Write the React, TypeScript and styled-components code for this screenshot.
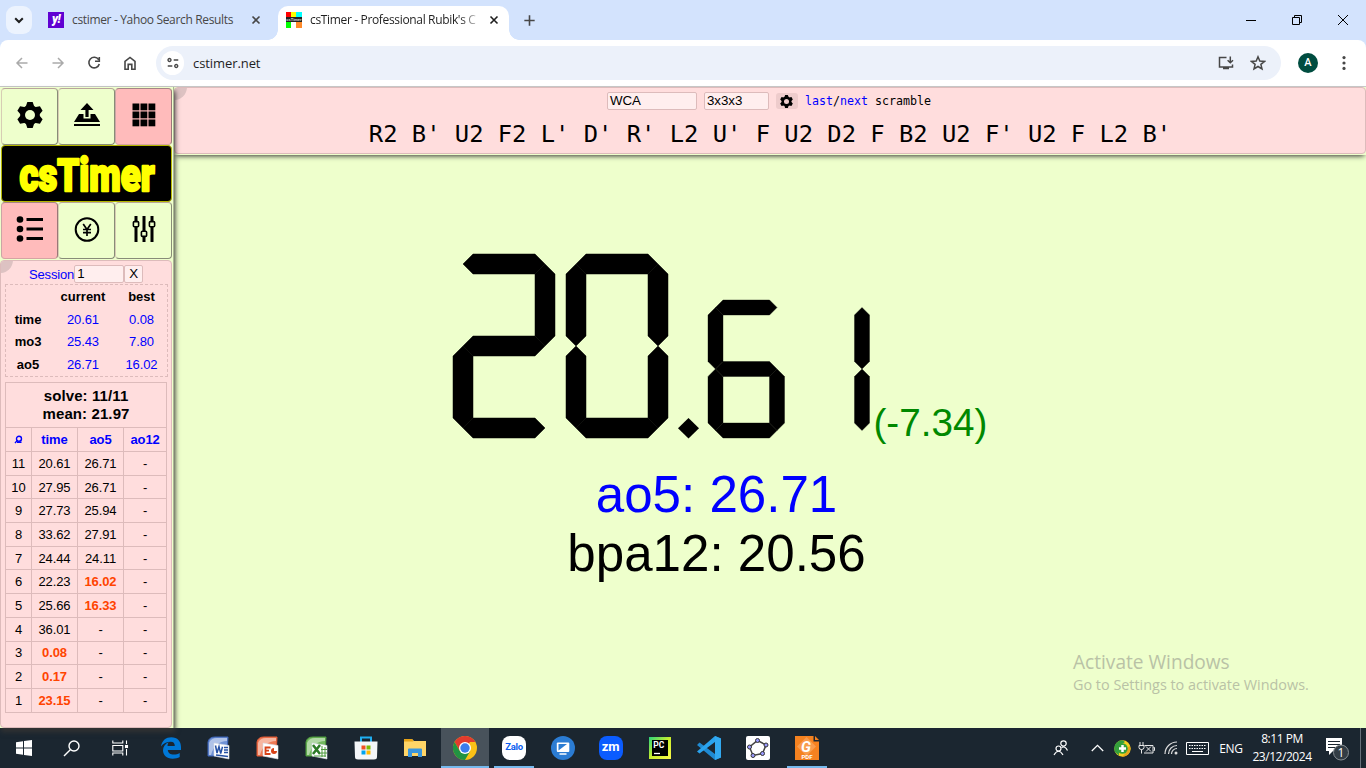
import React from "react";
import styled, { createGlobalStyle, css } from "styled-components";

const Global = createGlobalStyle`
  * { box-sizing: border-box; }
  html, body { margin: 0; padding: 0; overflow: hidden; }
  body { font-family: "Liberation Sans", Arial, sans-serif; color: #000; }
  svg { display: block; flex: none; }
`;

const ui = css`
  font-family: "Open Sans", "Noto Sans", sans-serif;
  white-space: nowrap;
`;

const Screen = styled.div`
  width: 1366px;
  height: 768px;
  display: flex;
  flex-direction: column;
  overflow: hidden;
  background: #eeffcc;
`;

/* ---------- browser chrome ---------- */

const TabStrip = styled.div`
  height: 40px;
  flex: none;
  display: flex;
  background: #d3e3fd;
`;

const TabSearch = styled.div`
  width: 26px;
  height: 28px;
  margin: 6px 0 0 6px;
  border-radius: 9px;
  background: #ecf3fe;
  display: flex;
  align-items: center;
  justify-content: center;
`;

const Tab = styled.div<{ $active?: boolean }>`
  position: relative;
  display: flex;
  align-items: center;
  width: ${(p) => (p.$active ? 231 : 246)}px;
  height: ${(p) => (p.$active ? 34 : 28)}px;
  margin-top: 6px;
  padding: 0 0 ${(p) => (p.$active ? 6 : 0)}px ${(p) => (p.$active ? 8 : 16)}px;
  background: ${(p) => (p.$active ? "#fff" : "transparent")};
  border-radius: 10px 10px 0 0;
  ${(p) =>
    p.$active &&
    css`
      &::before,
      &::after {
        content: "";
        position: absolute;
        bottom: 0;
        width: 10px;
        height: 10px;
      }
      &::before {
        left: -10px;
        background: radial-gradient(circle at 0 0, transparent 9.5px, #fff 10px);
      }
      &::after {
        right: -10px;
        background: radial-gradient(circle at 100% 0, transparent 9.5px, #fff 10px);
      }
    `}
`;

const TabTitle = styled.span<{ $fade?: boolean }>`
  ${ui}
  font-size: 12px;
  line-height: 18px;
  letter-spacing: -0.34px;
  width: 176px;
  margin-left: 8px;
  color: ${(p) => (p.$fade ? "#1f1f1f" : "#474747")};
  ${(p) => p.$fade && "mask-image: linear-gradient(90deg, #000 150px, transparent 172px);"}
`;

const YahooMark = styled.span`
  width: 16px;
  height: 16px;
  background: #6001d2;
  color: #fff;
  font: italic 900 12px/14px Roboto, sans-serif;
  text-align: center;
  letter-spacing: -0.5px;
`;

const CubeMark = styled.span`
  width: 16px;
  height: 16px;
  background: linear-gradient(90deg, #f00 5px, #ff0 5px 10px, #0ff 10px) top / 16px 5px no-repeat,
    linear-gradient(90deg, #0f0 5px, #fff 5px 10px, #ff8a2a 10px) bottom / 16px 6px no-repeat, #222;
  color: #ddd;
  font: bold 4px/15px "Liberation Sans", sans-serif;
  text-align: center;
`;

const NewTab = styled.div`
  margin: 13px 0 0 13px;
`;

const WindowButtons = styled.div`
  margin: 14px 17px 0 auto;
  display: flex;
  gap: 34px;
`;

const ToolbarWrap = styled.div`
  height: 46px;
  flex: none;
  background: #d3e3fd;
`;

const Toolbar = styled.div`
  height: 46px;
  background: #fff;
  border-radius: 8px 8px 0 0;
  display: flex;
  align-items: center;
  padding-left: 14px;
`;

const NavIcons = styled.div`
  display: flex;
  gap: 20px;
  width: 132px;
`;

const AddressBar = styled.div`
  width: 1125px;
  height: 34px;
  border-radius: 17px;
  background: #ecf1fa;
  display: flex;
  align-items: center;
  padding-left: 5px;
`;

const SiteInfo = styled.span`
  width: 23px;
  height: 24px;
  border-radius: 12px;
  background: #fff;
  display: flex;
  align-items: center;
  justify-content: center;
`;

const Url = styled.span`
  ${ui}
  font-size: 13px;
  letter-spacing: -0.08px;
  margin-left: 9px;
  color: #1f1f1f;
  flex: 1;
`;

const AddressActions = styled.div`
  display: flex;
  gap: 16px;
  margin-right: 15px;
`;

const Avatar = styled.span`
  width: 20px;
  height: 20px;
  border-radius: 50%;
  margin: 0 18px 0 17px;
  background: #004d40;
  color: #fff;
  font: 500 11px/20px Roboto, sans-serif;
  text-align: center;
`;

/* ---------- page ---------- */

const Page = styled.div`
  flex: 1;
  min-height: 0;
  display: flex;
  border-top: 1px solid #c9c9c9;
`;

const Sidebar = styled.div`
  position: relative;
  z-index: 1;
  width: 174px;
  display: flex;
  flex-direction: column;
  background: #eeffcc;
  box-shadow: 1px 4px 5px #333;
  border-right: 1px solid #aab594;
`;

const MenuGrid = styled.div`
  display: grid;
  grid-template-columns: 57px 57px 57px;
  grid-template-rows: 57px 57px 57px;
  padding: 1px 0 0 1px;
  height: 173px;
`;

const MenuButton = styled.div<{ $on?: boolean }>`
  display: flex;
  align-items: center;
  justify-content: center;
  padding-bottom: 3px;
  border: 1px solid #b9b39b;
  border-color: ${(p) => (p.$on ? "#a58585 #977 #d6a3a3 #cba5a5" : "#b9a59b #888c78 #888c78 #d7cdb4")};
  border-radius: 4px;
  background: ${(p) => (p.$on ? "#ffbbbb" : "#eeffcc")};
`;

const Logo = styled.div`
  grid-column: 1 / 4;
  display: flex;
  align-items: center;
  justify-content: center;
  background: #000;
  border: 1px solid #b5b500;
  border-radius: 4px;
`;

const LogoText = styled.text`
  font: 900 46px Roboto, "Liberation Sans", sans-serif;
  fill: #ff0;
  stroke: #ff0;
  stroke-width: 2.4px;
  stroke-linejoin: round;
`;

const LogoCap = styled.tspan`
  font-size: 44px;
`;

const panel = css`
  position: relative;
  overflow: hidden;
  background: #ffdddd;
  border: 1px solid #ddbbbb;
  border-radius: 4px;
  &::before {
    content: "";
    position: absolute;
    left: -14px;
    top: -14px;
    width: 26px;
    height: 26px;
    border-radius: 50%;
    background: #ddc2c2;
  }
`;

const ListPanel = styled.div`
  ${panel}
  width: 172px;
  flex: 1;
  padding: 4px 0 0 4px;
`;

const SessionRow = styled.div`
  display: flex;
  align-items: center;
  height: 18px;
  padding-left: 24px;
  font-size: 13px;
  letter-spacing: -0.15px;
  color: #00f;
`;

const Field = styled.span<{ $w: number; $center?: boolean }>`
  width: ${(p) => p.$w}px;
  height: 18px;
  border: 1px solid #ddbbbb;
  border-radius: 2px;
  background: #ffeeee;
  color: #000;
  font: 13.3px/16px "Liberation Sans", sans-serif;
  letter-spacing: 0;
  padding-left: ${(p) => (p.$center ? 0 : 2)}px;
  text-align: ${(p) => (p.$center ? "center" : "left")};
`;

const Stats = styled.div`
  width: 163px;
  height: 93px;
  margin-top: 1px;
  border: 1px dashed #ddbbbb;
  display: grid;
  grid-template-columns: 44px 66px 51px;
  grid-template-rows: 23px 22.5px 22.5px 22.5px;
  align-items: center;
  text-align: center;
  font-size: 13px;
`;

const Stat = styled.span<{ $head?: boolean }>`
  font-weight: ${(p) => (p.$head ? "bold" : "normal")};
  color: ${(p) => (p.$head ? "#000" : "#00f")};
  letter-spacing: ${(p) => (p.$head ? 0 : "-0.1px")};
`;

const Times = styled.table`
  width: 162px;
  margin-top: 5px;
  border-collapse: collapse;
  table-layout: fixed;
  font-size: 13px;
  letter-spacing: -0.1px;
  td, th {
    border: 1px solid #ddbbbb;
    padding: 0;
    text-align: center;
    line-height: 15px;
  }
`;

const Summary = styled.th`
  height: 45px;
  font-size: 15px;
  letter-spacing: 0.1px;
  div { line-height: 18px; }
`;

const Head = styled.th`
  height: 24px;
  color: #00f;
`;

const Cell = styled.td<{ $best?: boolean }>`
  height: 23.7px;
  color: ${(p) => (p.$best ? "#ff4400" : "#000")};
  font-weight: ${(p) => (p.$best ? "bold" : "normal")};
`;

const Main = styled.div`
  flex: 1;
  display: flex;
  flex-direction: column;
  position: relative;
`;

const ScramblePanel = styled.div`
  ${panel}
  height: 67px;
  flex: none;
  display: flex;
  flex-direction: column;
  align-items: center;
`;

const ScrambleShadow = styled.div`
  box-shadow: 0 3px 5px -2px #333;
  border-bottom: 1px solid #eeffcc;
`;

const ScrambleTools = styled.div`
  display: flex;
  align-items: center;
  height: 18px;
  margin: 4px 2px 0 0;
  font: 11.65px "DejaVu Sans Mono", monospace;
  white-space: pre;
`;

const Gap = styled.span<{ $w: number }>`
  width: ${(p) => p.$w}px;
`;

const GearBox = styled.span`
  width: 22px;
  height: 16px;
  border-radius: 3px;
  background: #eecccc;
  display: flex;
  align-items: center;
  justify-content: center;
`;

const Blue = styled.span`
  color: #00f;
`;

const Scramble = styled.div`
  font: 23.8px/34px "DejaVu Sans Mono", monospace;
  white-space: pre;
  margin-top: 7px;
`;

const TimerArea = styled.div`
  padding: 99px 0 0 279px;
`;

const TimerRow = styled.div`
  display: flex;
  align-items: flex-end;
  height: 184px;
`;

const Delta = styled.span`
  color: #008800;
  font-size: 38.7px;
  line-height: 44px;
  margin: 0 0 -7px 4px;
`;

const Averages = styled.div`
  width: 527px;
  margin-top: 27px;
  text-align: center;
  font-size: 51.1px;
  line-height: 59px;
  white-space: nowrap;
`;

const Watermark = styled.div`
  ${ui}
  position: absolute;
  left: 899px;
  bottom: 33px;
  color: #b9c2a6;
  font-size: 14.4px;
  line-height: 20px;
`;

const WatermarkTitle = styled.div`
  font-size: 19.1px;
  line-height: 26px;
`;

/* ---------- taskbar ---------- */

const Taskbar = styled.div`
  height: 40px;
  flex: none;
  background: #1b2630;
  display: flex;
  color: #fff;
`;

const TaskItem = styled.div<{ $active?: boolean; $open?: boolean; $w?: number }>`
  width: ${(p) => p.$w ?? 49}px;
  display: flex;
  align-items: center;
  justify-content: center;
  background: ${(p) => (p.$active ? "#48525b" : "transparent")};
  ${(p) =>
    p.$active &&
    "box-shadow: inset 0 -2px #76b9ed;"}
  ${(p) =>
    p.$open &&
    "background: linear-gradient(#76b9ed, #76b9ed) center bottom / 40px 2px no-repeat;"}
`;

const Tray = styled.div`
  ${ui}
  margin-left: auto;
  display: flex;
  align-items: center;
  font-size: 12px;
`;

const Clock = styled.div`
  width: 62px;
  text-align: center;
  line-height: 18px;
  letter-spacing: -0.45px;
  padding-bottom: 1px;
`;

const Lang = styled.span`
  width: 38px;
  text-align: center;
  letter-spacing: -0.3px;
`;

const AppTile = styled.span<{ $bg: string; $fg: string; $size: number; $round?: number }>`
  width: 24px;
  height: 24px;
  border-radius: ${(p) => p.$round ?? 8}px;
  background: ${(p) => p.$bg};
  color: ${(p) => p.$fg};
  font: bold ${(p) => p.$size}px/22px Roboto, sans-serif;
  letter-spacing: -0.3px;
  text-align: center;
`;

/* ---------- seven-segment display ---------- */

const SEGMENTS: Record<string, string> = {
  top: "10,10 20,0 82,0 92,10 82,20 20,20",
  topRight: "92,10 102,20 102,82 92,92 82,82 82,20",
  bottomRight: "92,92 102,102 102,164 92,174 82,164 82,102",
  bottom: "10,174 20,164 82,164 92,174 82,184 20,184",
  bottomLeft: "10,92 20,102 20,164 10,174 0,164 0,102",
  topLeft: "10,10 20,20 20,82 10,92 0,82 0,20",
  middle: "10,92 20,82 82,82 92,92 82,102 20,102",
};

const LIT: Record<string, string[]> = {
  "0": ["top", "topRight", "bottomRight", "bottom", "bottomLeft", "topLeft"],
  "1": ["topRight", "bottomRight"],
  "2": ["top", "topRight", "middle", "bottomLeft", "bottom"],
  "6": ["top", "topLeft", "middle", "bottomLeft", "bottomRight", "bottom"],
};

const DigitBox = styled.svg<{ $gap: number }>`
  margin-right: ${(p) => p.$gap}px;
  overflow: visible;
`;

function Digit({ value, scale = 1, gap }: { value: string; scale?: number; gap: number }) {
  return (
    <DigitBox $gap={gap} width={102 * scale} height={184 * scale} viewBox="0 0 102 184">
      {LIT[value].map((s) => (
        <polygon key={s} points={SEGMENTS[s]} stroke="#000" strokeWidth="0.5" />
      ))}
    </DigitBox>
  );
}

/* ---------- icons ---------- */

const Stroke = ({ d, size = 16, color = "#474747", w = 1.6 }: { d: string; size?: number; color?: string; w?: number }) => (
  <svg width={size} height={size} viewBox="0 0 16 16" fill="none" stroke={color} strokeWidth={w}>
    <path d={d} />
  </svg>
);

const Gear = ({ size, hole = "#eeffcc" }: { size: number; hole?: string }) => (
  <svg width={size} height={size} viewBox="-13 -13 26 26">
    <g>
      {[0, 60, 120].map((a) => (
        <path key={a} d="M-4-9 -2.7-13H2.7L4-9V9L2.7 13H-2.7L-4 9Z" transform={`rotate(${a})`} />
      ))}
    </g>
    <circle r="7.4" fill="none" stroke="#000" strokeWidth="5" />
    <circle r="5" fill={hole} />
  </svg>
);

const Office = ({ color, light, children }: { color: string; light: string; children: React.ReactNode }) => (
  <svg width="24" height="24" viewBox="0 0 24 24">
    <path d="M1 6Q2 1 8 1H21L20 20H1Z" fill={light} stroke={color} strokeWidth="1" />
    <path d="M2 7Q4 2 10 2H20V5Q8 5 4 19H2Z" fill="#fff" opacity=".45" />
    <path d="M7 7 22 9.5V23L7 20Z" fill="#fff" stroke="#d5dae3" strokeWidth=".6" />
    {children}
  </svg>
);

const stats = [
  ["time", "20.61", "0.08"],
  ["mo3", "25.43", "7.80"],
  ["ao5", "26.71", "16.02"],
];

const solves: [string, string, string, boolean?, boolean?][] = [
  ["11", "20.61", "26.71"],
  ["10", "27.95", "26.71"],
  ["9", "27.73", "25.94"],
  ["8", "33.62", "27.91"],
  ["7", "24.44", "24.11"],
  ["6", "22.23", "16.02", false, true],
  ["5", "25.66", "16.33", false, true],
  ["4", "36.01", "-"],
  ["3", "0.08", "-", true],
  ["2", "0.17", "-", true],
  ["1", "23.15", "-", true],
];

function BrowserChrome() {
  return (
    <>
      <TabStrip>
        <TabSearch><Stroke d="M4.2 6.2 8 10l3.8-3.8" color="#1f1f1f" w={2} /></TabSearch>
        <Tab>
          <YahooMark>y!</YahooMark>
          <TabTitle>cstimer - Yahoo Search Results</TabTitle>
          <Stroke d="M4.5 4.5l7 7M11.5 4.5l-7 7" />
        </Tab>
        <Tab $active>
          <CubeMark>csTimer</CubeMark>
          <TabTitle $fade>csTimer - Professional Rubik's C</TabTitle>
          <Stroke d="M4.5 4.5l7 7M11.5 4.5l-7 7" color="#1f1f1f" />
        </Tab>
        <NewTab><Stroke d="M8 2.5v11M2.5 8h11" size={15} w={1.7} /></NewTab>
        <WindowButtons>
          <svg width="12" height="12"><path d="M1 6.5h10" stroke="#000" /></svg>
          <svg width="12" height="12" fill="none" stroke="#000"><path d="M1.5 3.5h7v7h-7zM3.5 3.5v-2h7v7h-2" /></svg>
          <svg width="12" height="12" fill="none" stroke="#000"><path d="M1 1l10 10M11 1 1 11" /></svg>
        </WindowButtons>
      </TabStrip>
      <ToolbarWrap>
        <Toolbar>
          <NavIcons>
            <Stroke d="M13.5 8H3M8 3 3 8l5 5" color="#aaa" w={1.5} />
            <Stroke d="M2.5 8H13M8 3l5 5-5 5" color="#aaa" w={1.5} />
            <Stroke d="M12.6 4.6A5.3 5.3 0 1 0 13.3 9M13.3 2v4.3H9" />
            <Stroke d="M3 6.3 8 2.4l5 3.9v7.9H9.8V9.4H6.2v4.8H3z" />
          </NavIcons>
          <Gap $w={10} />
          <AddressBar>
            <SiteInfo>
              <Stroke d="M8.8 4.5H14M2 11.5h5.2M2.3 4.5a1.7 1.7 0 1 0 3.4 0a1.7 1.7 0 1 0-3.4 0M10 11.5a1.7 1.7 0 1 0 3.4 0a1.7 1.7 0 1 0-3.4 0" size={14} />
            </SiteInfo>
            <Url>cstimer.net</Url>
            <AddressActions>
              <Stroke d="M8.5 2.5H1.5v9.5h13V9.5M5 13.6h6M12.3 1.5v6M9.6 5.2l2.7 2.6L15 5.2" w={1.5} />
              <Stroke d="M8 1.8 9.8 6l4.7.4-3.6 3 1.1 4.6L8 11.5 4 14l1.1-4.6-3.6-3L6.2 6z" w={1.5} />
            </AddressActions>
          </AddressBar>
          <Avatar>A</Avatar>
          <svg width="16" height="16" fill="#474747"><circle cx="8" cy="2.6" r="1.6" /><circle cx="8" cy="8" r="1.6" /><circle cx="8" cy="13.4" r="1.6" /></svg>
        </Toolbar>
      </ToolbarWrap>
    </>
  );
}

function Menu() {
  return (
    <MenuGrid>
      <MenuButton><Gear size={26} /></MenuButton>
      <MenuButton>
        <svg width="26" height="26" viewBox="0 0 26 26">
          <path d="M13 1 19.5 8H14.6V15H11.4V8H6.5ZM5 12H9.5V16.5H16.5V12H21L26 20H0ZM0 22H26V24H0Z" />
        </svg>
      </MenuButton>
      <MenuButton $on>
        <svg width="24" height="24">
          {[0, 8, 16].map((y) => [0, 8, 16].map((x) => <rect key={`${x}-${y}`} x={x + 0.5} y={y + 0.5} width="6.8" height="6.8" />))}
        </svg>
      </MenuButton>
      <Logo>
        <svg width="138" height="54">
          <LogoText x="1.5" y="44" transform="translate(0 0)" textLength="135" lengthAdjust="spacingAndGlyphs">cs<LogoCap>T</LogoCap>imer</LogoText>
        </svg>
      </Logo>
      <MenuButton $on>
        <svg width="28" height="26">
          {[3.5, 13, 22.5].map((y) => (
            <g key={y}><circle cx="4" cy={y} r="3.3" /><rect x="10.5" y={y - 1.5} width="16.5" height="3" /></g>
          ))}
        </svg>
      </MenuButton>
      <MenuButton>
        <svg width="26" height="26" fill="none" stroke="#000" strokeWidth="2">
          <circle cx="13" cy="13.5" r="11.3" /><path d="M9.2 8 13 13.5l3.8-5.5M13 13.5v6.5M9 13.5h8M9 16.7h8" strokeWidth="1.7" />
        </svg>
      </MenuButton>
      <MenuButton>
        <svg width="26" height="28" fill="#eeffcc" stroke="#000">
          <path d="M5 1v26M13 1v26M21 1v26" strokeWidth="3" />
          <g strokeWidth="1.6"><rect x="2.4" y="6.6" width="5.2" height="5.2" rx="1" /><rect x="10.4" y="16.2" width="5.2" height="5.2" rx="1" /><rect x="18.4" y="6.6" width="5.2" height="5.2" rx="1" /></g>
        </svg>
      </MenuButton>
    </MenuGrid>
  );
}

const SearchGlyph = styled.svg`
  margin: 0 auto;
`;

function SessionPanel() {
  return (
    <ListPanel>
      <SessionRow>Session<Field $w={50}>1</Field><Field $w={19} $center>X</Field></SessionRow>
      <Stats>
        <Stat /><Stat $head>current</Stat><Stat $head>best</Stat>
        {stats.map(([name, cur, best]) => (
          <React.Fragment key={name}><Stat $head>{name}</Stat><Stat>{cur}</Stat><Stat>{best}</Stat></React.Fragment>
        ))}
      </Stats>
      <Times>
        <colgroup><col width="26" /><col width="46" /><col width="46" /><col width="43" /></colgroup>
        <tbody>
          <tr><Summary colSpan={4}><div>solve: 11/11</div><div>mean: 21.97</div></Summary></tr>
          <tr>
            <Head>
              <SearchGlyph width="9" height="9" viewBox="0 0 9 9" fill="none" stroke="#00f" strokeWidth="1.4"><circle cx="5" cy="3.8" r="2.5" /><path d="M3.4 5.4 1 8M3 7.3h4.5" /></SearchGlyph>
            </Head>
            <Head>time</Head><Head>ao5</Head><Head>ao12</Head>
          </tr>
          {solves.map(([n, t, a, bt, ba]) => (
            <tr key={n}><Cell>{n}</Cell><Cell $best={bt}>{t}</Cell><Cell $best={ba}>{a}</Cell><Cell>-</Cell></tr>
          ))}
        </tbody>
      </Times>
    </ListPanel>
  );
}

function TimerPane() {
  return (
    <Main>
      <ScrambleShadow>
        <ScramblePanel>
          <ScrambleTools>
            <Field $w={90}>WCA</Field><Gap $w={7} /><Field $w={65}>3x3x3</Field><Gap $w={7} />
            <GearBox><Gear size={13} hole="#eecccc" /></GearBox><Gap $w={7} />
            <Blue>last</Blue>/<Blue>next</Blue> scramble
          </ScrambleTools>
          <Scramble>R2 B' U2 F2 L' D' R' L2 U' F U2 D2 F B2 U2 F' U2 F L2 B'</Scramble>
        </ScramblePanel>
      </ScrambleShadow>
      <TimerArea>
        <TimerRow role="img" aria-label="20.61">
          <Digit value="2" gap={11} />
          <Digit value="0" gap={10.4} />
          <DigitBox $gap={9} width="21" height="20"><path d="M10.5 0 21 10.3 10.5 20.6 0 10.3Z" /></DigitBox>
          <Digit value="6" scale={0.75} gap={8} />
          <Digit value="1" scale={0.75} gap={0} />
          <Delta>(-7.34)</Delta>
        </TimerRow>
        <Averages><Blue>ao5: 26.71</Blue><br />bpa12: 20.56</Averages>
      </TimerArea>
      <Watermark><WatermarkTitle>Activate Windows</WatermarkTitle>Go to Settings to activate Windows.</Watermark>
    </Main>
  );
}

function WindowsTaskbar() {
  return (
    <Taskbar>
      <TaskItem $w={47}>
        <svg width="16" height="16" fill="#fff"><path d="M0 2.3 7 1.2V7.5H0ZM8 1 16 0V7.5H8ZM0 8.5H7V14.8L0 13.8ZM8 8.5H16V16L8 15Z" /></svg>
      </TaskItem>
      <TaskItem $w={49}>
        <svg width="17" height="17" fill="none" stroke="#fff" strokeWidth="1.4"><circle cx="11" cy="6" r="5" /><path d="M7.3 9.7 1 16" /></svg>
      </TaskItem>
      <TaskItem $w={48}>
        <svg width="17" height="16" fill="none" stroke="#fff" strokeWidth="1.1"><path d="M.8.5V3H10.8V.5M.8 5.5h10v5.5h-10zM.8 15.5V13H10.8V15.5M14.5.5v3.500M14.5 9v6.500" /><rect x="13.5" y="5.5" width="2" height="2" fill="#fff" /></svg>
      </TaskItem>
      <TaskItem $w={54}>
        <svg width="20" height="22" viewBox="0 0 20 22"><path d="M0 9.5C1 3.5 5 .3 10.3.3C16.5.3 20 4.5 20 10V13H6.8C7 16 9.5 17.6 12.7 17.6C15 17.6 17 17 18.7 15.9V20C16.8 21 14.5 21.7 11.7 21.7C5.5 21.7 2 18 2 13.3C2 9.5 4.3 6.7 7.7 5.2C6.9 6.1 6.6 7.5 6.5 8.9H13.8C13.8 6.3 12.5 4.7 9.8 4.7C5.5 4.7 2 6.5 0 9.5Z" fill="#0078d7" /></svg>
      </TaskItem>
      <TaskItem $w={42}>
        <Office color="#3c62b5" light="#6f92d6"><path d="M8.5 9.5 10 17 12 10.5 13.7 17.6 15.5 10.8M17 11.5h4M17 14h4M17 16.5h4M9 19l12 1.500" fill="none" stroke="#2450a4" strokeWidth="1.5" /></Office>
      </TaskItem>
      <TaskItem $w={56}>
        <Office color="#e45a35" light="#ee7a55"><path d="M14.5 11.500H9.500V18H14.500M9.500 14.700H13" fill="none" stroke="#d84318" strokeWidth="1.800" /><circle cx="18" cy="15" r="3" fill="#d84318" /><path d="M18 15V11.500H21.500V15Z" fill="#fff" /></Office>
      </TaskItem>
      <TaskItem $w={42}>
        <Office color="#4d9a3c" light="#72b85e"><path d="M8 9l7 9M15 9l-7 9" stroke="#2c7a26" strokeWidth="2.5" /><path d="M17 10v11M20 11v10M16 13.5h6M16 17h6M9 20h12" fill="none" stroke="#4d9a3c" strokeWidth="1" /></Office>
      </TaskItem>
      <TaskItem $w={56}>
        <svg width="24" height="24"><path d="M7 6V1.5h10V6" fill="none" stroke="#1faef0" strokeWidth="2" /><path d="M.5 5.5H23.5L23 21Q23 23.5 20 23.5H4Q1 23.5 1 21Z" fill="#f4f6f8" /><path d="M7.5 9.5h4v4h-4z" fill="#f25022" /><path d="M12.5 9.5h4v4h-4z" fill="#7fba00" /><path d="M7.5 14.5h4v4h-4z" fill="#00a4ef" /><path d="M12.5 14.5h4v4h-4z" fill="#ffb900" /></svg>
      </TaskItem>
      <TaskItem $w={42}>
        <svg width="22" height="20"><path d="M0 1h8l2 2h12v15H0z" fill="#ffd567" /><path d="M0 1h8l1.5 2.5H0z" fill="#e8a317" /><path d="M4 19V11.5Q4 10.500 5 10.500H17Q18 10.500 18 11.500V19H14V15H8V19Z" fill="#3a96dd" /></svg>
      </TaskItem>
      <Gap $w={5} />
      <TaskItem $w={48} $active>
        <svg width="24" height="24" viewBox="0 0 24 24"><circle cx="12" cy="12" r="12" fill="#fbc116" /><path d="M1.6 6A12 12 0 0 1 22.4 6H12Z" fill="#e33b2e" /><path d="M1.6 6 6.8 15 12 12 17 6Z" fill="#e33b2e" /><path d="M1.6 6A12 12 0 0 0 12 24L17.2 15H6.8Z" fill="#229342" /><circle cx="12" cy="12" r="6" fill="#fff" /><circle cx="12" cy="12" r="4.7" fill="#3b7ded" /></svg>
      </TaskItem>
      <TaskItem $w={50} $open><AppTile $bg="#fff" $fg="#0a5df0" $size={9.5}>Zalo</AppTile></TaskItem>
      <TaskItem $w={47}>
        <svg width="24" height="24"><circle cx="12" cy="12" r="12" fill="#2b7cd3" /><rect x="5.8" y="6.5" width="12.5" height="9.5" rx="1" fill="#fff" /><path d="M7.5 14.5V8H16Z" fill="#2b7cd3" /><path d="M8.5 18h7" stroke="#fff" strokeWidth="1.5" /></svg>
      </TaskItem>
      <TaskItem><AppTile $bg="#0b5cff" $fg="#fff" $size={13}>zm</AppTile></TaskItem>
      <TaskItem>
        <svg width="22" height="22"><defs><linearGradient id="pc" x2="1" y2="1"><stop stopColor="#2bd47d" /><stop offset=".5" stopColor="#c8ee2c" /><stop offset="1" stopColor="#fcf84a" /></linearGradient></defs><rect width="22" height="22" fill="url(#pc)" /><rect x="3" y="3" width="16" height="16" /><text x="4.3" y="11" fill="#fff" fontSize="8.5" fontWeight="bold" fontFamily="Roboto, sans-serif">PC</text><path d="M5 16.5h6" stroke="#fff" strokeWidth="1.3" /></svg>
      </TaskItem>
      <TaskItem>
        <svg width="24" height="24"><path d="M18 0 24 2.5V21.5L18 24 0 9 2.5 6.5 18 18Z" fill="#1f8ad2" /><path d="M18 6 2.5 17.5 0 15.5 18 0Z" fill="#2aa3ee" /><path d="M18 0 24 2.5V21.5L18 24Z" fill="#32a9f0" /></svg>
      </TaskItem>
      <TaskItem>
        <svg width="24" height="24"><rect width="24" height="24" rx="2" fill="#fff" /><path d="M11.5 4.5 20 9 16.5 17.5 7 19.5 3.5 11Z" fill="none" stroke="#444" strokeWidth="1.5" /><g fill="#9a9aff" stroke="#333"><circle cx="11.5" cy="4.5" r="2" /><circle cx="20" cy="9" r="2" /><circle cx="16.5" cy="17.5" r="2" /><circle cx="7" cy="19.5" r="2" /><circle cx="3.5" cy="11" r="2" /></g></svg>
      </TaskItem>
      <TaskItem $open>
        <svg width="24" height="24"><path d="M0 0H18.5V5.5H24V24H0Z" fill="#f58220" /><path d="M20 0 24 4H20Z" fill="#f58220" /><path d="M11.5 1 21 10.5 11.5 20 2 10.5Z" fill="#f89c4e" /><text x="6" y="16" fill="#fff" fontSize="15" fontWeight="bold" fontStyle="italic" fontFamily="Roboto, sans-serif">G</text><text x="6.500" y="23" fill="#fff" fontSize="6" fontWeight="bold" fontFamily="Roboto, sans-serif">PDF</text></svg>
      </TaskItem>
      <Tray>
        <svg width="16" height="16" fill="none" stroke="#fff" strokeWidth="1.2"><circle cx="10.5" cy="3.5" r="2.7" /><path d="M8.5 7.5Q12 5.5 14.5 10.5" /><circle cx="5.5" cy="8.5" r="2.5" /><path d="M1 15Q5.5 7.5 10 15" /></svg>
        <Gap $w={22} />
        <svg width="13" height="8" fill="none" stroke="#fff" strokeWidth="1.3"><path d="M.8 7 6.5 1.3 12.2 7" /></svg>
        <Gap $w={10} />
        <svg width="17" height="17"><circle cx="8.5" cy="8.5" r="8.2" fill="#f5cf1f" /><path d="M1 12A8.2 8.2 0 0 1 8.5.3L11 2Q4 5 5 15.5Z" fill="#35a03c" /><path d="M16 6A8.2 8.2 0 0 1 8 16.7Q13 13 13 8Z" fill="#e6a51b" /><circle cx="8.5" cy="8.5" r="5.2" fill="#35a03c" /><path d="M8.5 5v7M5 8.5h7" stroke="#fff" strokeWidth="2.5" /></svg>
        <Gap $w={7} />
        <svg width="17" height="13" fill="none" stroke="#e8e8e8" strokeWidth="1"><path d="M2 0v3M5 0v3M1 3.5h5v2Q6 7.5 3.5 7.5Q1 7.5 1 5.5zM3.5 7.5v4M6.5 3.5h8.500v7.500H6M15.500 5.500h1v3h-1M8 4.500l5 5M13 4.500l-5 5" /></svg>
        <Gap $w={9} />
        <svg width="14" height="14" fill="none" stroke="#ddd" strokeWidth="1.2"><path d="M1 13A12 12 0 0 1 13 1M4.5 13A8.5 8.5 0 0 1 13 4.5M7.5 13A5.5 5.5 0 0 1 13 7.5" /><circle cx="12" cy="12" r="1.5" fill="#ddd" stroke="none" /></svg>
        <Gap $w={8} />
        <svg width="23" height="13" fill="none" stroke="#fff"><path d="M.5.5h22v12H.5z" /><path d="M3 3.5h17M3 6.5h17" strokeDasharray="1.5 1" /><path d="M6 9.5h11" /></svg>
        <Gap $w={3} />
        <Lang>ENG</Lang>
        <Gap $w={1} />
        <Clock>8:11 PM<br />23/12/2024</Clock>
        <Gap $w={10} />
        <svg width="28" height="26"><path d="M3 3H19V16H10L6 20V16H3Z" fill="#fff" /><path d="M5 6.5h12M5 9.5h12M5 12.5h8" stroke="#1b2630" /><circle cx="18" cy="17.5" r="7.5" fill="#333d45" stroke="#888f94" /><text x="18" y="22" fill="#fff" fontSize="12" textAnchor="middle">1</text></svg>
        <Gap $w={9} />
        <svg width="6" height="40"><path d="M.5 0v40" stroke="#66707a" /></svg>
      </Tray>
    </Taskbar>
  );
}

export default function App() {
  return (
    <Screen>
      <Global />
      <BrowserChrome />
      <Page>
        <Sidebar>
          <Menu />
          <SessionPanel />
        </Sidebar>
        <TimerPane />
      </Page>
      <WindowsTaskbar />
    </Screen>
  );
}
